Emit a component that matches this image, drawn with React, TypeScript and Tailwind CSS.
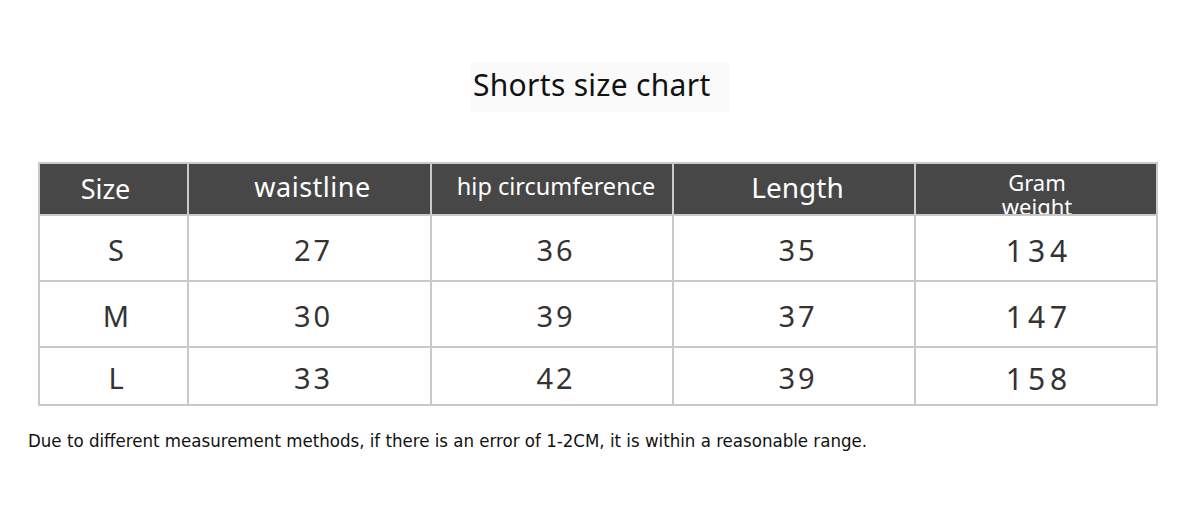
export default function App() {
  const rows = [
    ["S", "27", "36", "35", "134"],
    ["M", "30", "39", "37", "147"],
    ["L", "33", "42", "39", "158"],
  ]
  const cols = "grid-cols-[147px_243px_242px_242px_242px]"

  return (
    <div className="w-[1200px] h-[507px] bg-white font-['Noto_Sans',sans-serif] overflow-hidden">
      {/* Title */}
      <div className="flex justify-center pt-[63px]">
        <div className="bg-[#fafafa] w-[258px] h-[49px] flex items-center pl-[2px] pb-[6px]">
          <h1 className="text-[30px] leading-none text-[#111] tracking-[0.3px]">Shorts size chart</h1>
        </div>
      </div>

      {/* Table */}
      <div className="ml-[38px] mt-[50px] w-[1120px] border-2 border-[#c9c9c9]">
        <div className={`grid ${cols} h-[50px] bg-[#474747] text-white`}>
          <div className="flex items-center justify-center text-[27px] pr-[16px]">Size</div>
          <div className="flex items-center justify-center text-[27px] pb-[4px] pl-[6px] border-l-2 border-[#c9c9c9] tracking-[0.5px]">waistline</div>
          <div className="flex items-center justify-center text-[23.5px] pb-[4px] pl-[8px] border-l-2 border-[#c9c9c9]">hip circumference</div>
          <div className="flex items-center justify-center text-[28px] pb-[5px] pl-[7px] border-l-2 border-[#c9c9c9]">Length</div>
          <div className="flex flex-col items-center justify-end text-[22px] leading-[24px] pl-[2px] border-l-2 border-[#c9c9c9] overflow-hidden">
            <span>Gram</span>
            <span className="-mb-[4px]">weight</span>
          </div>
        </div>
        {rows.map((r, i) => (
          <div
            key={r[0]}
            className={`grid ${cols} ${i === 2 ? "h-[58px]" : "h-[66px]"} border-t-2 border-[#c9c9c9] text-[#333]`}
          >
            {r.map((c, j) => (
              <div
                key={j}
                className={`flex items-center justify-center pt-[4px] ${j === 4 ? "text-[30px] tracking-[5px] pl-[6px]" : "text-[29px] tracking-[3px] pl-[8px]"} ${j === 0 ? "" : "border-l-2 border-[#c9c9c9]"}`}
              >
                {c}
              </div>
            ))}
          </div>
        ))}
      </div>

      <p className="ml-[28px] mt-[21px] text-[18.5px] text-[#111] font-['DejaVu_Sans_Condensed','DejaVu_Sans',sans-serif]">
        Due to different measurement methods, if there is an error of 1-2CM, it is within a reasonable range.
      </p>
    </div>
  )
}
